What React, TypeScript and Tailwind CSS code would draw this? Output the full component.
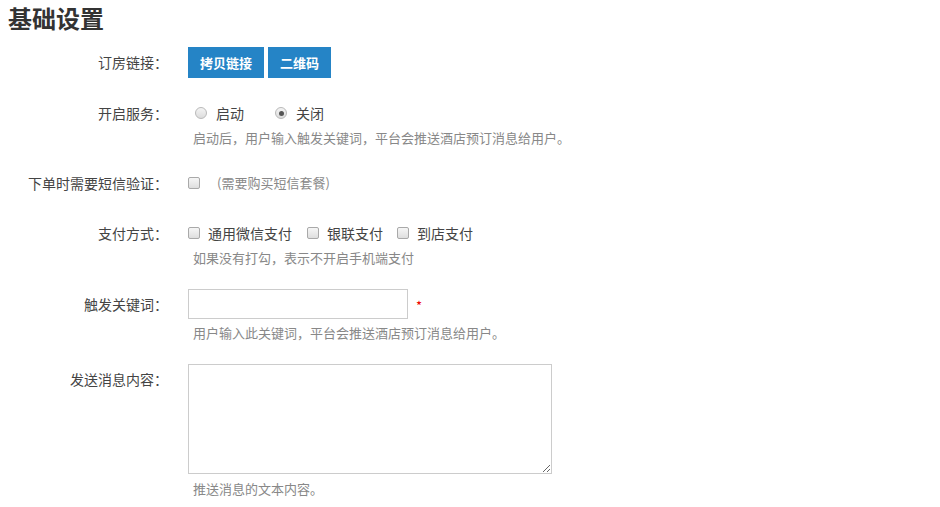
import React from "react";

const font = { fontFamily: '"Microsoft YaHei", "Noto Sans CJK SC", "Liberation Sans", sans-serif' };

function Label({ children, top = false }: { children: React.ReactNode; top?: boolean }) {
  return (
    <div className={`w-[168px] shrink-0 text-right text-[14px] text-[#444] ${top ? "pt-[5px] leading-[20px]" : ""}`}>
      {children}
    </div>
  );
}

function Help({ children }: { children: React.ReactNode }) {
  return <div className="pl-[5px] text-[13px] leading-[20px] text-[#888]">{children}</div>;
}

function Radio({ checked }: { checked?: boolean }) {
  return (
    <span className="flex h-[12px] w-[12px] items-center justify-center rounded-full border border-[#b9b9b9] bg-gradient-to-b from-[#f4f4f4] to-[#dcdcdc]">
      {checked && <span className="h-[5px] w-[5px] rounded-full bg-[#555]" />}
    </span>
  );
}

function Check() {
  return (
    <span className="inline-block h-[12px] w-[12px] rounded-[2px] border border-[#a9a9a9] bg-gradient-to-b from-[#f6f6f6] to-[#dedede]" />
  );
}

export default function App() {
  return (
    <div className="min-h-screen bg-white text-[#333]" style={font}>
      <h1 className="pl-[8px] pt-[2px] text-[24px] font-bold leading-[32px] text-[#333]">基础设置</h1>

      {/* 订房链接 */}
      <div className="mt-[13px] flex items-center gap-[20px]">
        <Label>订房链接：</Label>
        <div className="flex gap-[4px]">
          <button className="h-[31px] bg-[#2584c6] px-[12px] text-[13px] font-bold text-white">拷贝链接</button>
          <button className="h-[31px] bg-[#2584c6] px-[12px] text-[13px] font-bold text-white">二维码</button>
        </div>
      </div>

      {/* 开启服务 */}
      <div className="mt-[23px] flex gap-[20px]">
        <Label>
          <span className="leading-[24px]">开启服务：</span>
        </Label>
        <div>
          <div className="flex h-[24px] items-center text-[14px] text-[#444]">
            <span className="ml-[7px]"><Radio /></span>
            <span className="ml-[9px]">启动</span>
            <span className="ml-[31px]"><Radio checked /></span>
            <span className="ml-[9px]">关闭</span>
          </div>
          <div className="mt-[3px]">
            <Help>启动后，用户输入触发关键词，平台会推送酒店预订消息给用户。</Help>
          </div>
        </div>
      </div>

      {/* 短信验证 */}
      <div className="mt-[23px] flex h-[24px] items-center gap-[20px]">
        <Label>下单时需要短信验证：</Label>
        <div className="flex items-center">
          <Check />
          <span className="ml-[17px] text-[13px] text-[#888]">(需要购买短信套餐)</span>
        </div>
      </div>

      {/* 支付方式 */}
      <div className="mt-[26px] flex gap-[20px]">
        <Label>
          <span className="leading-[24px]">支付方式：</span>
        </Label>
        <div>
          <div className="flex h-[24px] items-center text-[14px] text-[#444]">
            <Check />
            <span className="ml-[8px]">通用微信支付</span>
            <span className="ml-[15px] flex"><Check /></span>
            <span className="ml-[8px]">银联支付</span>
            <span className="ml-[14px] flex"><Check /></span>
            <span className="ml-[8px]">到店支付</span>
          </div>
          <div className="mt-[3px]">
            <Help>如果没有打勾，表示不开启手机端支付</Help>
          </div>
        </div>
      </div>

      {/* 触发关键词 */}
      <div className="mt-[21px] flex gap-[20px]">
        <Label>
          <span className="leading-[30px]">触发关键词：</span>
        </Label>
        <div>
          <div className="flex items-center">
            <input className="h-[30px] w-[220px] border border-[#ccc] px-[6px] text-[13px] outline-none" />
            <span className="ml-[8px] mt-[3px] text-[13px] text-[#e00]">*</span>
          </div>
          <div className="mt-[4px]">
            <Help>用户输入此关键词，平台会推送酒店预订消息给用户。</Help>
          </div>
        </div>
      </div>

      {/* 发送消息内容 */}
      <div className="mt-[21px] flex gap-[20px]">
        <Label top>发送消息内容：</Label>
        <div>
          <textarea className="block h-[110px] w-[364px] border border-[#ccc] p-[6px] text-[13px] outline-none" />
          <div className="mt-[5px]">
            <Help>推送消息的文本内容。</Help>
          </div>
        </div>
      </div>
    </div>
  );
}
